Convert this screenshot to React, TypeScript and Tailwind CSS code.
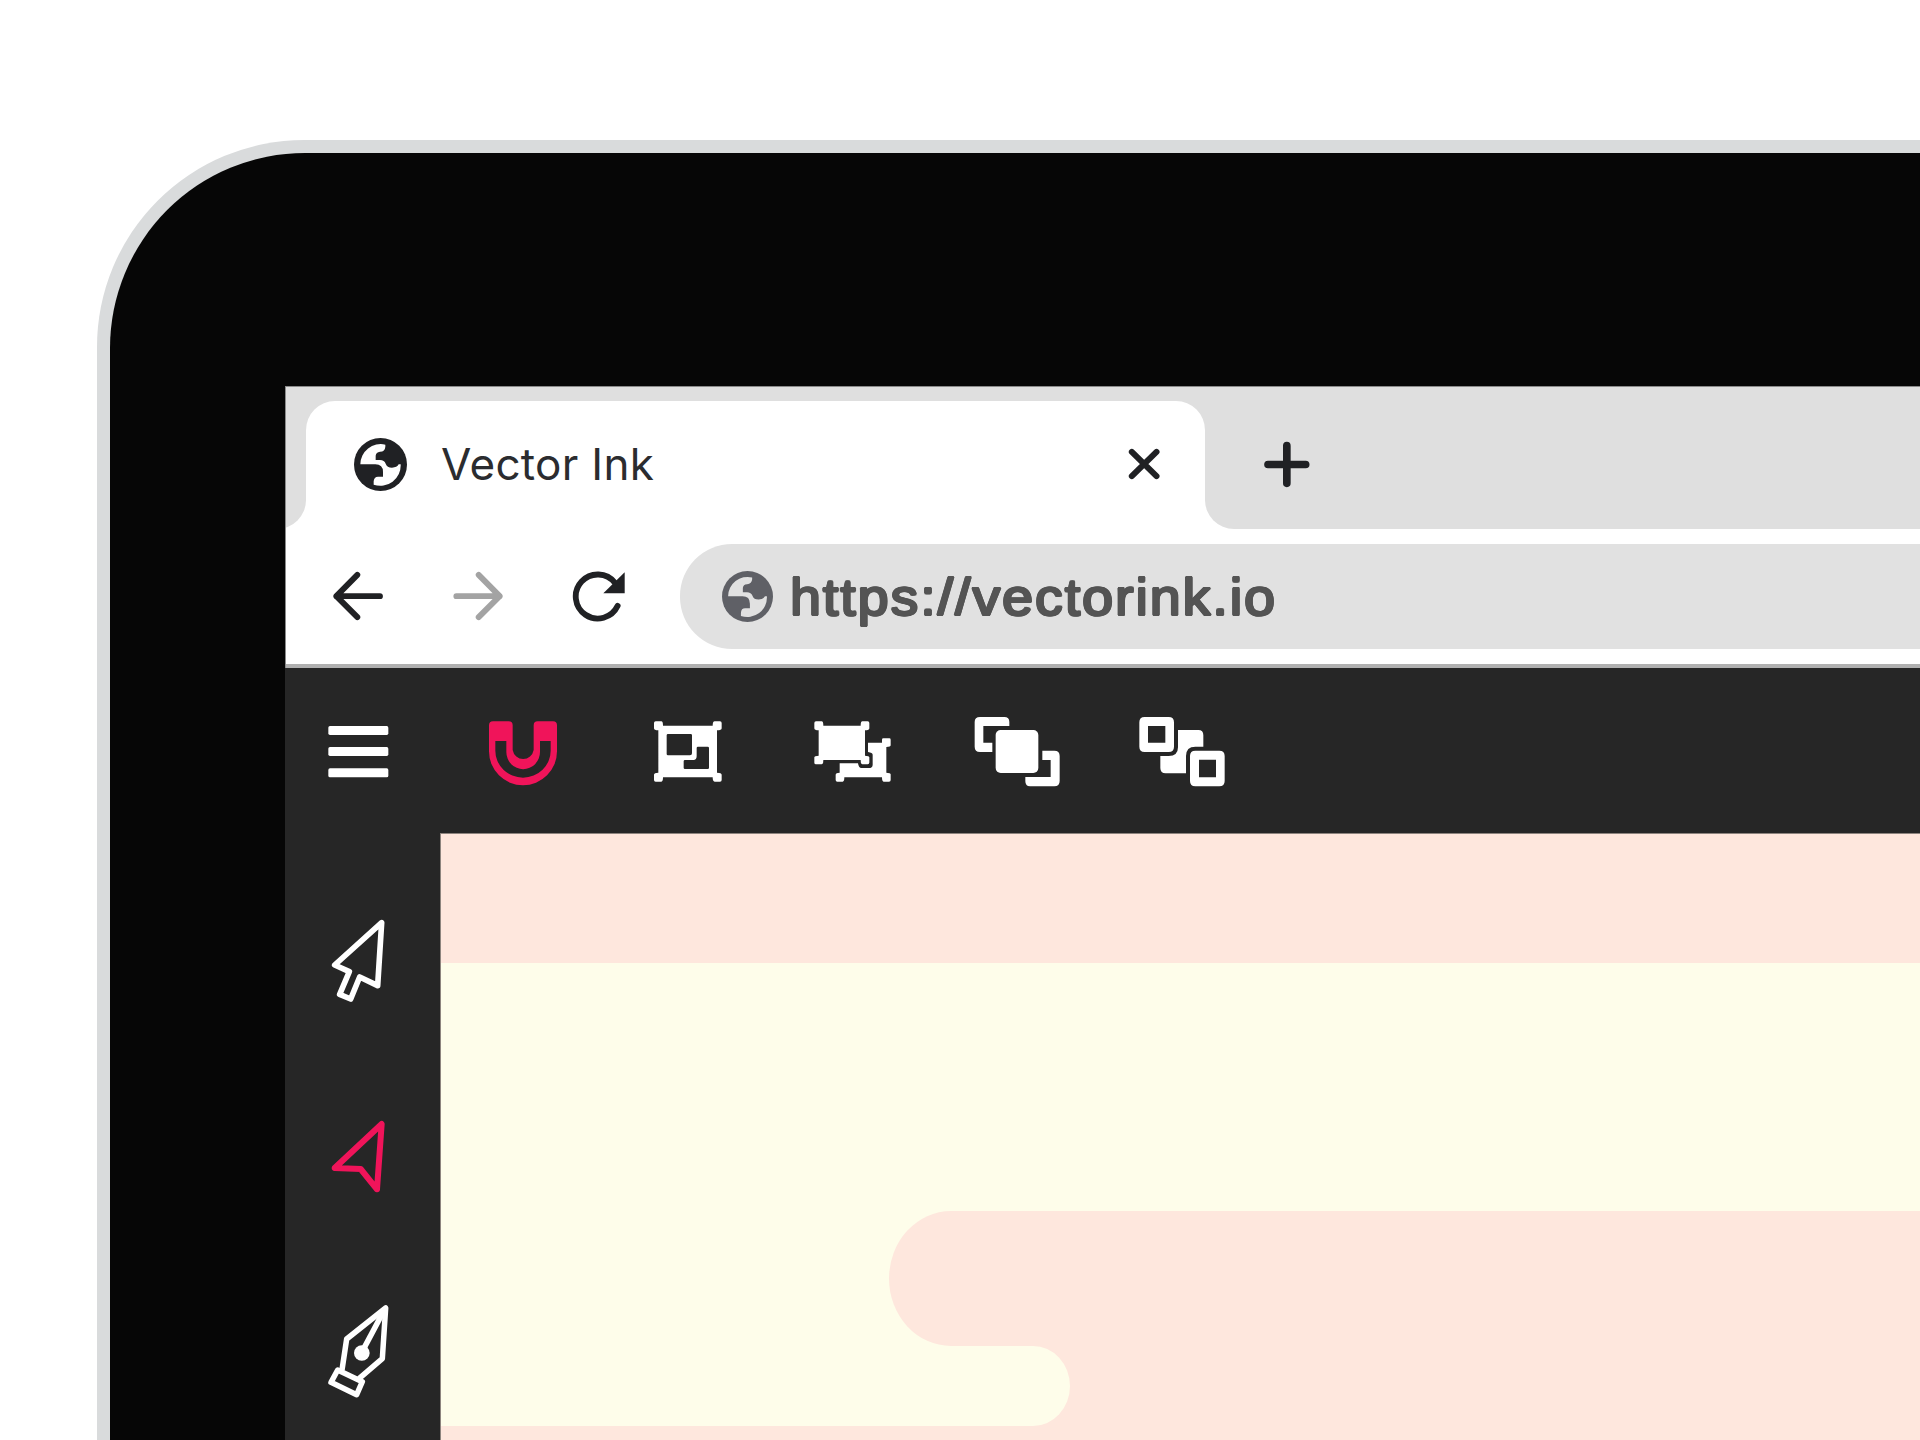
import type { ReactNode } from "react";

type IconProps = {
  box: string;
  width: number;
  height: number;
  label: string;
  className?: string;
  children: ReactNode;
};

/* Every icon is drawn on a grid three times finer than its rendered size. */
function Icon({ box, width, height, label, className = "", children }: IconProps) {
  return (
    <svg
      role="img"
      aria-label={label}
      viewBox={box}
      width={width}
      height={height}
      fill="none"
      stroke="none"
      className={`shrink-0 ${className}`}
    >
      {children}
    </svg>
  );
}

function Globe({ size, className, cut }: { size: number; className: string; cut: string }) {
  return (
    <Icon box="252 204 159 159" width={size} height={size} label="Site" className={className}>
      <circle cx="331.5" cy="283.5" r="79.5" fill="currentColor" />
      <path
        fill={cut}
        d="M271 283 A61 61 0 0 1 346 224 V230 Q345 245 330 245 Q318 246 317 257 V270 H330 Q343 270 347 281 Q351 293 366 293 Q381 293 386 283 H392 A61 61 0 0 1 311 344 V334 Q312 320 324 320 H339 V306 Q339 283 316 283 Z"
      />
    </Icon>
  );
}

function TabStrip() {
  return (
    <div className="flex h-[142px] items-end bg-[#dfdfdf]">
      <div className="h-[128px] w-[20px] overflow-hidden bg-white">
        <div className="-ml-[29px] h-full w-[49px] rounded-br-[29px] bg-[#dfdfdf]" />
      </div>
      <div className="flex h-[128px] w-[899px] items-center rounded-t-[29px] bg-white pr-[44px] pb-[2px] pl-[48px]">
        <Globe size={53} className="text-[#202124]" cut="#ffffff" />
        <span className="ml-[34px] grow font-['Inter'] text-[44px] leading-none tracking-[0.3px] whitespace-nowrap text-[#2b2c2f]">
          Vector Ink
        </span>
        <Icon box="142.5 202.5 102 102" width={34} height={34} label="Close tab">
          <path d="M157 217 L231 290 M231 217 L157 290" stroke="#202124" strokeWidth="18" strokeLinecap="round" />
        </Icon>
      </div>
      <div className="h-[128px] grow bg-white">
        <div className="flex h-full items-center rounded-bl-[29px] bg-[#dfdfdf] pb-px pl-[57px]">
          <Icon box="546 180 147 147" width={49} height={49} label="New tab">
            <path d="M564 253.5 H677 M620.5 197 V310" stroke="#202124" strokeWidth="23" strokeLinecap="round" />
          </Icon>
        </div>
      </div>
    </div>
  );
}

function NavigationBar() {
  return (
    <div className="flex h-[139px] items-center border-b-4 border-[#b0b0b0] bg-white pl-[46px]">
      <Icon box="186 601.5 156 156" width={52} height={52} label="Back">
        <path
          d="M262 613 L199 677 L262 740 M199 677 H330"
          stroke="#202124"
          strokeWidth="17.5"
          strokeLinecap="round"
          strokeLinejoin="round"
        />
      </Icon>
      <Icon box="546 601.5 156 156" width={52} height={52} label="Forward" className="ml-[68px]">
        <path
          d="M626 613 L689 677 L626 740 M689 677 H559"
          stroke="#a3a3a3"
          strokeWidth="17.5"
          strokeLinecap="round"
          strokeLinejoin="round"
        />
      </Icon>
      <Icon box="900 601.5 174 156" width={58} height={52} label="Reload" className="ml-[66px]">
        <path d="M1043 706 A66 66 0 1 1 1035 637" stroke="#202124" strokeWidth="17.5" strokeLinecap="round" />
        <path d="M1064 605 V668 H1000 Z" fill="#202124" />
      </Icon>
      <div className="ml-[52px] flex h-[105px] grow items-center rounded-l-[52px] bg-[#e1e1e1] pl-[42px]">
        <Globe size={51} className="text-[#5f6066]" cut="#e1e1e1" />
        <span className="ml-[17px] origin-left scale-x-[1.07] font-['Liberation_Sans'] text-[52px] leading-none tracking-[1.8px] whitespace-nowrap text-[#545454] [text-shadow:1.2px_0_#545454,-1.2px_0_#545454,0_1.2px_#545454,0_-1.2px_#545454,0.8px_0.8px_#545454,-0.8px_0.8px_#545454,0.8px_-0.8px_#545454,-0.8px_-0.8px_#545454]">
          https://vectorink.io
        </span>
      </div>
    </div>
  );
}

function ToolBar() {
  return (
    <div className="flex h-[165px] shrink-0 items-start bg-[#262626] pt-[42px] pl-[43px]">
      <Icon box="84 60 183 240" width={61} height={80} label="Menu">
        <g fill="#fff">
          <rect x="85" y="108" width="180" height="27" rx="5" />
          <rect x="85" y="171" width="180" height="27" rx="5" />
          <rect x="85" y="235" width="180" height="27" rx="5" />
        </g>
      </Icon>
      <Icon box="561 60 216 240" width={72} height={80} label="Snap" className="ml-[98px]">
        <path
          fill="#f0145a"
          fillRule="evenodd"
          d="M579 94 H626 Q638 94 638 106 V180 A32 33 0 0 0 701 180 V106 Q701 94 713 94 H759 Q771 94 771 106 V184 A102 102 0 0 1 567 184 V106 Q567 94 579 94 Z M586 153 V182 A83 81 0 0 0 752 182 V153 H720 V186 A50 51 0 0 1 619 186 V153 Z"
        />
      </Icon>
      <Icon box="96 60 216 240" width={72} height={80} label="Group" className="ml-[93px]">
        <path
          fill="#fff"
          fillRule="evenodd"
          d="M107 94 H124 Q129 94 129 107 H278 Q278 94 284 94 H300 Q305 94 305 99 V115 Q305 121 291 121 V248 Q305 248 305 254 V270 Q305 275 300 275 H284 Q278 275 278 262 H129 Q129 275 124 275 H107 Q102 275 102 270 V254 Q102 248 115 248 V121 Q102 121 102 115 V99 Q102 94 107 94 Z M144 132 Q140 132 140 136 V192 Q140 196 144 196 H210 Q216 196 216 190 V136 Q216 132 212 132 Z M234 170 Q230 170 230 174 V198 Q230 210 220 210 H195 Q191 210 191 214 V233 Q191 237 195 237 H263 Q267 237 267 233 V174 Q267 170 263 170 Z"
        />
      </Icon>
      <Icon box="576 60 243 240" width={81} height={80} label="Ungroup" className="ml-[88px]">
        <path
          fill="#fff"
          d="M588 94 H605 Q610 94 610 107 H722 Q722 94 727 94 H743 Q748 94 748 99 V115 Q748 121 735 121 V197 Q748 197 748 202 V217 Q748 223 743 223 H727 Q722 223 722 210 H610 Q610 223 605 223 H588 Q583 223 583 218 V202 Q583 197 596 197 V121 Q583 121 583 115 V99 Q583 94 588 94 Z"
        />
        <path
          fill="#fff"
          d="M744 158 H786 V149 Q786 145 790 145 H808 Q812 145 812 149 V166 Q812 171 799 171 V248 Q812 248 812 253 V270 Q812 275 807 275 H791 Q786 275 786 262 H673 Q673 275 668 275 H652 Q647 275 647 270 V254 Q647 248 659 248 V220 H714 Q716 234 724 234 H746 Q758 234 758 224 V194 Q758 188 744 186 Z"
        />
      </Icon>
      <Icon box="96 60 273 240" width={91} height={80} label="Bring to front" className="ml-[79px]">
        <g fill="#fff">
          <path d="M120 81 H193 Q208 81 208 96 V108 H130 V158 H157 V186 H120 Q104 186 104 170 V96 Q104 81 120 81 Z" />
          <rect x="167" y="120" width="128" height="129" rx="15" />
          <path d="M307 182 H343 Q359 182 359 198 V273 Q359 289 343 289 H270 Q256 289 256 274 V261 H332 V210 H307 Z" />
        </g>
      </Icon>
      <Icon box="591 60 270 240" width={90} height={80} label="Send to back" className="ml-[74px]">
        <g fill="#fff" fillRule="evenodd">
          <path d="M614 81 H686 Q702 81 702 97 V170 Q702 186 686 186 H614 Q598 186 598 170 V97 Q598 81 614 81 Z M624 108 V158 H676 V108 Z" />
          <path d="M714 120 H775 Q790 120 790 136 V170 H766 Q738 170 738 198 V250 H677 Q661 250 661 234 V198 H686 Q714 198 714 172 Z" />
          <path d="M766 182 H838 Q854 182 854 198 V273 Q854 289 838 289 H766 Q750 289 750 273 V198 Q750 182 766 182 Z M777 209 V262 H828 V209 Z" />
        </g>
      </Icon>
    </div>
  );
}

function SideBar() {
  return (
    <div className="flex w-[155px] shrink-0 flex-col items-center bg-[#262626] pt-[85px] pr-[8px]">
      <Icon box="150 114 171 258" width={57} height={86} label="Select">
        <path
          d="M305 128 L293 317 L239 291 L212 357 L179 343 L208 275 L164 255 Z"
          stroke="#fff"
          strokeWidth="17"
          strokeLinejoin="round"
        />
      </Icon>
      <Icon box="150 720 171 222" width={57} height={74} label="Direct select" className="mt-[116px]">
        <path d="M305 732 L291 928 L242 867 L164 864 Z" stroke="#f0145a" strokeWidth="18" strokeLinejoin="round" />
      </Icon>
      <Icon box="141 69 189 291" width={63} height={97} label="Pen" className="mt-[109px]">
        <g stroke="#fff" strokeWidth="16.5" strokeLinejoin="round">
          <path d="M186 270 L200 177 L317 84 L307 236 L237 296" />
          <path d="M173 270 L247 305 L230 344 L153 307 Z" />
          <path d="M315 86 L250 208" />
        </g>
        <circle cx="245.5" cy="219" r="23.5" fill="#fff" />
      </Icon>
    </div>
  );
}

function Artboard() {
  return (
    <div className="flex grow flex-col border-t border-l border-[#8d847e] bg-[#fee7dd]">
      <div className="h-[129px] shrink-0" />
      <div className="h-[248px] shrink-0 bg-[#fefdea]" />
      <div className="h-[135px] shrink-0 bg-[#fefdea] pl-[448px]">
        <div className="h-full rounded-l-[62px_67.5px] bg-[#fee7dd]" />
      </div>
      <div className="h-[80px] w-[629px] shrink-0 rounded-r-[37px_40px] bg-[#fefdea]" />
    </div>
  );
}

export default function App() {
  return (
    <div className="h-[1440px] w-[1920px] overflow-hidden bg-white pt-[140px] pl-[97px]">
      <div className="h-[1300px] rounded-tl-[207px] bg-[#d9dbdc] pt-[13px] pl-[13px]">
        <div className="h-full rounded-tl-[195px] bg-[#060606] pt-[233px] pl-[175px]">
          <div className="flex h-[1054px] flex-col">
            <div className="shrink-0 border-t border-l border-[#8a8a8a]">
              <TabStrip />
              <NavigationBar />
            </div>
            <ToolBar />
            <div className="flex grow">
              <SideBar />
              <Artboard />
            </div>
          </div>
        </div>
      </div>
    </div>
  );
}
